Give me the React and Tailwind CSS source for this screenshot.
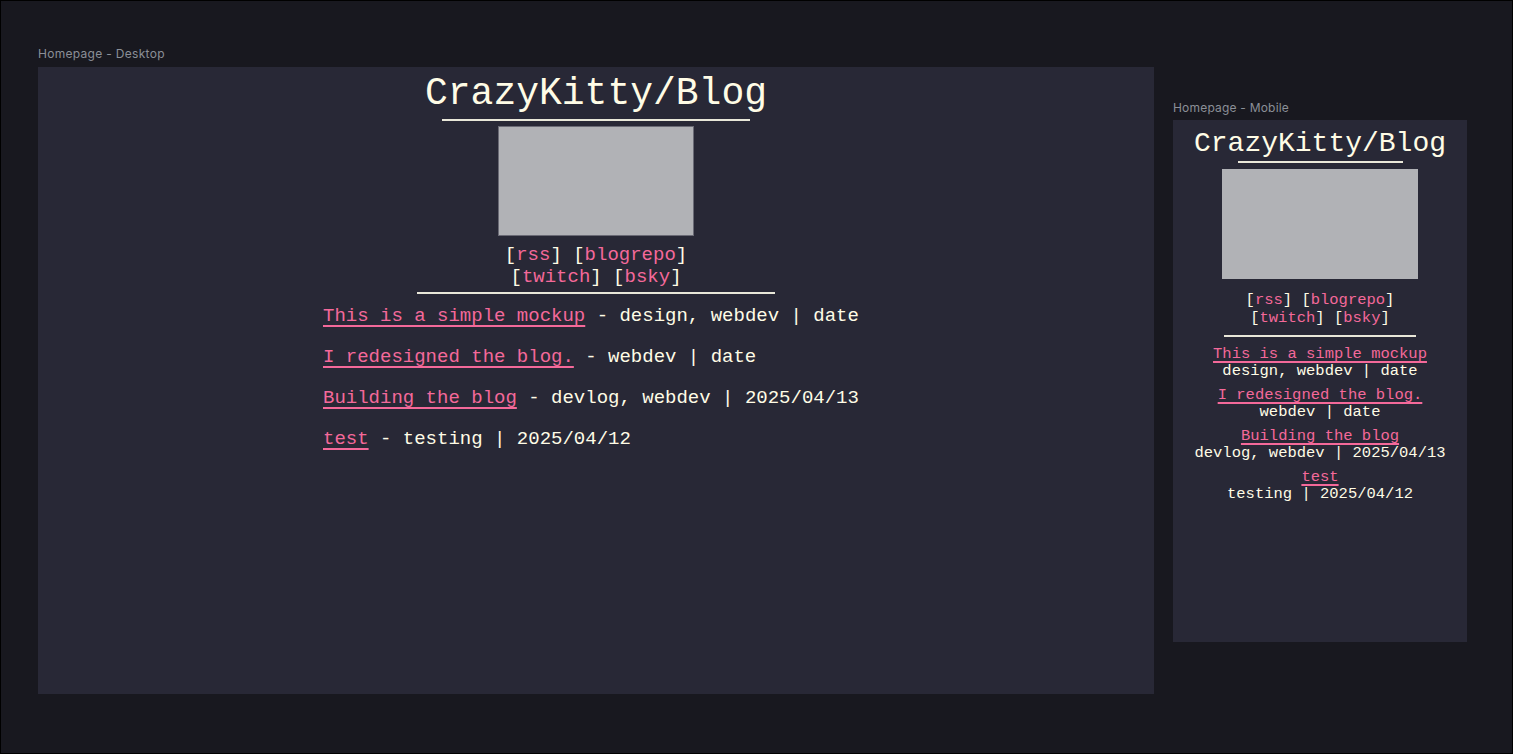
import React from 'react';

const posts = [
  { title: 'This is a simple mockup', meta: 'design, webdev | date' },
  { title: 'I redesigned the blog.', meta: 'webdev | date' },
  { title: 'Building the blog', meta: 'devlog, webdev | 2025/04/13' },
  { title: 'test', meta: 'testing | 2025/04/12' },
];

const mono = { fontFamily: '"Liberation Mono", "DejaVu Sans Mono", monospace' };
const label = { fontFamily: 'Inter, "Noto Sans", sans-serif' };

const Links = () => (
  <>
    <div>
      [<a className="text-[#f4699a]">rss</a>] [<a className="text-[#f4699a]">blogrepo</a>]
    </div>
    <div>
      [<a className="text-[#f4699a]">twitch</a>] [<a className="text-[#f4699a]">bsky</a>]
    </div>
  </>
);

const DesktopFrame = () => (
  <div className="w-[1116px] h-[627px] bg-[#282836] flex flex-col items-center text-[#fffce6]" style={mono}>
    <h1 className="pt-[5px] text-[38px] leading-[44px]">CrazyKitty/Blog</h1>
    <div className="mt-[3px] h-[2px] w-[308px] bg-[#e9e7d9]" />
    <div className="mt-[5px] w-[196px] h-[110px] bg-[#b1b2b6] border border-[#6a6a75]" />
    <div className="mt-[8px] text-[19px] leading-[22px] text-center">
      <Links />
    </div>
    <div className="mt-[4px] h-[2px] w-[358px] bg-[#e9e7d9]" />
    <ul className="mt-[11px] w-[546px] flex flex-col gap-[19px] text-[19px] leading-[22px]">
      {posts.map((p) => (
        <li key={p.title} className="whitespace-pre">
          <a className="text-[#f4699a] underline underline-offset-[4px] decoration-[2px]">{p.title}</a>
          {' - ' + p.meta}
        </li>
      ))}
    </ul>
  </div>
);

const MobileFrame = () => (
  <div className="w-[294px] h-[522px] bg-[#282836] flex flex-col items-center text-[#fffce6]" style={mono}>
    <h1 className="pt-[8px] text-[28px] leading-[32px]">CrazyKitty/Blog</h1>
    <div className="mt-[1px] h-[2px] w-[165px] bg-[#e9e7d9]" />
    <div className="mt-[6px] w-[196px] h-[110px] bg-[#b1b2b6]" />
    <div className="mt-[12px] text-[15.5px] leading-[18px] text-center">
      <Links />
    </div>
    <div className="mt-[8px] h-[2px] w-[192px] bg-[#e9e7d9]" />
    <ul className="mt-[9px] flex flex-col gap-[7px] text-[15.5px] leading-[17px] text-center">
      {posts.map((p) => (
        <li key={p.title}>
          <a className="text-[#f4699a] underline underline-offset-[3px] decoration-[2px]">{p.title}</a>
          <div>{p.meta}</div>
        </li>
      ))}
    </ul>
  </div>
);

export default function App() {
  return (
    <div className="w-[1513px] h-[754px] bg-[#18181f] border border-black flex items-start pl-[37px]">
      <div className="mt-[46px] flex flex-col gap-[6px]">
        <div className="text-[12px] leading-[14px] tracking-[0.3px] text-[#8b8f97]" style={label}>
          Homepage - Desktop
        </div>
        <DesktopFrame />
      </div>
      <div className="ml-[19px] mt-[100px] flex flex-col gap-[5px]">
        <div className="text-[12px] leading-[14px] tracking-[0.2px] text-[#8b8f97]" style={label}>
          Homepage - Mobile
        </div>
        <MobileFrame />
      </div>
    </div>
  );
}
